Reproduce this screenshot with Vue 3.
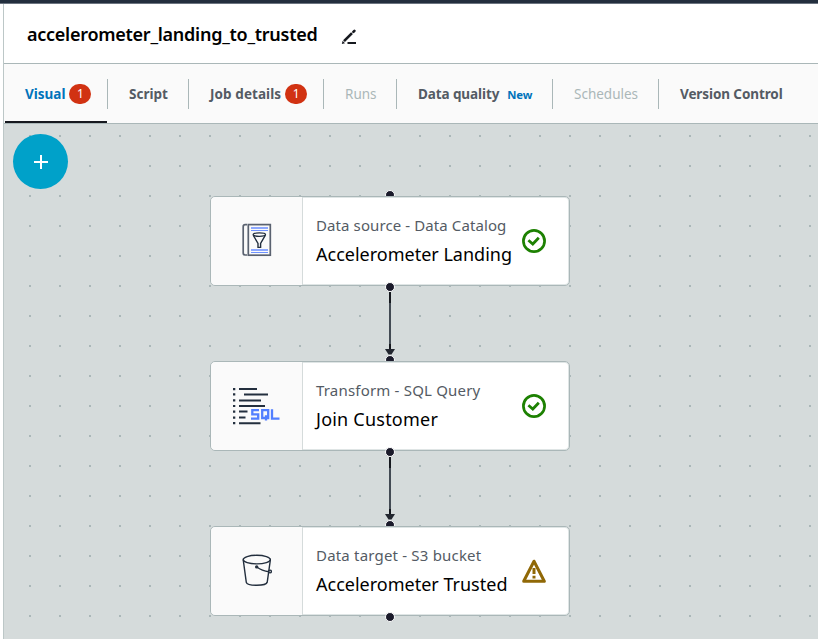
<script setup>
const tabs = [
  { label: 'Visual', state: 'active', badge: 1 },
  { label: 'Script' },
  { label: 'Job details', badge: 1, state: 'details' },
  { label: 'Runs', state: 'disabled' },
  { label: 'Data quality', tag: 'New', state: 'quality' },
  { label: 'Schedules', state: 'disabled' },
  { label: 'Version Control', state: 'version' },
]
const nodes = [
  { id: 'source', kind: 'Data source - Data Catalog', name: 'Accelerometer Landing', status: 'ok' },
  { id: 'sql', kind: 'Transform - SQL Query', name: 'Join Customer', status: 'ok' },
  { id: 'target', kind: 'Data target - S3 bucket', name: 'Accelerometer Trusted', status: 'warn' },
]
</script>

<template>
  <div class="page">
    <div class="topbar"></div>
    <div class="panel">
      <header class="head">
        <h1>accelerometer_landing_to_trusted</h1>
        <svg class="pencil" width="16" height="16" viewBox="0 0 16 16">
          <path d="M3 12.2 11 4.2" stroke="#16191f" stroke-width="2.6" />
          <path d="M12.4 2.8 13.4 1.8" stroke="#16191f" stroke-width="2.6" stroke-linecap="round" />
          <path d="M.8 15 1.6 11.8 4 14.2Z" fill="#16191f" />
          <path d="M6.5 14H15" stroke="#16191f" stroke-width="2" />
        </svg>
      </header>
      <nav class="tabs">
        <div v-for="t in tabs" :key="t.label" class="tab" :class="t.state">
          <span class="label">{{ t.label }}</span>
          <span v-if="t.badge" class="badge">{{ t.badge }}</span>
          <span v-if="t.tag" class="tag">{{ t.tag }}</span>
        </div>
      </nav>
      <main class="canvas">
        <button class="add" aria-label="Add node">
          <svg width="14" height="14" viewBox="0 0 14 14"><path d="M7 0V14M0 7H14" stroke="#fff" stroke-width="2" /></svg>
        </button>
        <div class="flow">
          <section v-for="(n, i) in nodes" :key="n.id" class="step">
            <i class="port top"></i>
            <article class="node">
              <div class="icon">
                <svg v-if="n.id === 'source'" width="30" height="34" viewBox="0 0 30 34" fill="none">
                  <path d="M5 1.7H3.2Q1.2 1.7 1.2 3.7V30Q1.2 32 3.2 32H5" stroke="#5a6270" stroke-width="1.7" />
                  <rect x="6.3" y="1.6" width="22" height="30.6" stroke="#5a6270" stroke-width="1.7" />
                  <path d="M9 5H26M9 27H26" stroke="#8da8ff" stroke-width="2" />
                  <path d="M9 7.5H26M9 29.5H26" stroke="#6f92ff" stroke-width="1" />
                  <ellipse cx="17.3" cy="11.6" rx="6.2" ry="1.7" stroke="#232f3e" stroke-width="1.3" />
                  <path d="M11.2 12.2 16 20.4V24.4H18.6V20.4L23.4 12.2" stroke="#232f3e" stroke-width="1.4" />
                </svg>
                <svg v-else-if="n.id === 'sql'" class="sql" width="48" height="38" viewBox="0 0 48 38" fill="none">
                  <path d="M1 2.1H3.3M1 7.4H3.3M1 13.4H3.3M1 19H3.3M1 24.6H3.3M1 30.6H3.3M1 36.2H3.3" stroke="#232f3e" stroke-width="2.2" />
                  <path d="M7 2.1H25M12 7.4H36M7 13.4H29M7 19H33M7 24.6H15.5M7 30.6H13.5M7 36.2H28.5" stroke="#232f3e" stroke-width="2" />
                  <path d="M27 23.2H20.3V27.4H26.2V31.6H19M30.2 23.2H36.2V31H30.2ZM34 28.2V33.4M40 22.2V31.6H47.5" stroke="#527fff" stroke-width="2.3" />
                </svg>
                <svg v-else width="30" height="34" viewBox="0 0 30 34" fill="none" stroke="#232f3e" stroke-width="1.4">
                  <ellipse cx="14.8" cy="6.6" rx="13.6" ry="4.3" />
                  <path d="M1.2 6.7 4.3 29.3Q5 32.3 14.8 32.3Q24.4 32.3 25.2 29.3L28.4 6.7" />
                  <path d="M14.8 14Q20 18 27 18.8" />
                  <circle cx="14.7" cy="13.9" r="1" fill="#232f3e" />
                  <circle cx="28" cy="18.5" r="1.4" />
                </svg>
              </div>
              <div class="copy">
                <p class="kind" :class="n.id">{{ n.kind }}</p>
                <p class="name" :class="n.id">{{ n.name }}</p>
              </div>
              <svg v-if="n.status === 'ok'" class="status" width="24" height="24" viewBox="0 0 24 24" fill="none" stroke="#1d8102">
                <circle cx="12" cy="12" r="10.6" stroke-width="2.7" />
                <path d="M6.4 11.2 10.8 15 16.8 8.8" stroke-width="2.8" />
              </svg>
              <svg v-else class="status" width="24" height="24" viewBox="0 0 24 24" fill="none" stroke="#906806">
                <path d="M12 2.2 22.3 22.3H1.7Z" stroke-width="3" stroke-linejoin="round" />
                <path d="M12 9V15M12 16.8V19.4" stroke-width="3" />
              </svg>
            </article>
            <i class="port bottom"></i>
            <svg v-if="i < 2" class="edge" width="12" height="66" viewBox="0 0 12 66">
              <path d="M6 0V58" stroke="#434b54" stroke-width="2" />
              <path d="M6 0V11M6 52V58" stroke="#16191f" stroke-width="2" />
              <path d="M1 57H11L7.5 62.5H4.5Z" fill="#232730" />
            </svg>
          </section>
        </div>
      </main>
    </div>
  </div>
</template>

<style>
body { margin: 0; overflow: hidden; }
</style>

<style scoped>
* { box-sizing: border-box; }
.page { width: 818px; height: 639px; display: flex; flex-direction: column; overflow: hidden; background: #fff; font-family: "Noto Sans", "Open Sans", sans-serif; }
.topbar { height: 4px; flex: none; background: #232f3e; border-bottom: 1px solid #6b7480; }
.panel { flex: 1; min-height: 0; margin-left: 3px; border-left: 1px solid #bcc7c7; display: flex; flex-direction: column; }
.head { height: 60px; flex: none; display: flex; align-items: center; border-bottom: 1px solid #aab7b8; padding: 0 0 0 23px; }
h1 { margin: 0; width: 314px; font-size: 18px; line-height: 24px; font-weight: 600; letter-spacing: -0.26px; color: #000; white-space: nowrap; }
.pencil { position: relative; top: 3px; }
.tabs { height: 60px; flex: none; display: grid; grid-template-columns: 103px 81px 135px 73px 156px 106px 1fr; padding-left: 1px; background: #fafafa; border-bottom: 1px solid #aab7b8; }
.tab { position: relative; display: flex; align-items: center; padding-left: 21px; color: #545b64; font-size: 13.5px; font-weight: 700; white-space: nowrap; }
.tab:not(:last-child)::after { content: ""; position: absolute; right: 0; top: 15px; height: 30px; width: 1px; background: #aab7b8; }
.tab:first-child { padding-left: 20px; }
.label { padding-top: 1px; }
.details { letter-spacing: 0.08px; }
.quality, .version { letter-spacing: -0.1px; }
.active { color: #0073bb; }
.active::before { content: ""; position: absolute; left: 0; right: 1px; bottom: 0; height: 2px; background: #16191f; }
.disabled { color: #aab7b8; font-weight: 400; }
.badge { width: 22px; height: 20px; margin-left: 4px; border-radius: 10px; background: #d13212; color: #fff; font-size: 12px; line-height: 20px; font-weight: 400; text-align: center; }
.tag { margin-left: 8px; padding-top: 2px; color: #0073bb; font-size: 11.3px; }
.canvas { position: relative; flex: 1; min-height: 0; padding: 10px 0 0 9px; background: conic-gradient(from 90deg at 28px 28px, #aab7b8 90deg, transparent 0) -3px -17px / 30px 30px, #d5dbdb; }
.add { position: absolute; left: 9px; top: 10px; width: 55px; height: 55px; border: 0; padding: 0 0 0 1px; border-radius: 50%; background: #00a1c9; display: flex; align-items: center; justify-content: center; }
.flow { width: 360px; margin: 62px 0 0 197px; display: flex; flex-direction: column; gap: 75px; }
.step { position: relative; height: 90px; }
.node { position: relative; height: 90px; display: flex; align-items: center; border: 1px solid #aab7b8; border-radius: 5px; background: #fff; overflow: hidden; box-shadow: inset 0 0 0 1px #dfe5e5; }
.icon { width: 92px; height: 88px; flex: none; display: flex; align-items: center; justify-content: center; padding-bottom: 2px; background: #fafafa; border-right: 1px solid #d5dbdb; border-radius: 4px 0 0 4px; }
.sql { margin: 2px 1px 0 0; }
.copy { width: 219px; padding: 0 0 2px 13px; white-space: nowrap; }
.copy p { margin: 0; }
.kind { font-size: 15px; line-height: 28px; letter-spacing: 0.19px; color: #545b64; }
.kind.source { letter-spacing: 0.1px; }
.name { font-size: 18px; line-height: 30px; color: #000; }
.name.sql { margin: 0; letter-spacing: 0.22px; }
.status { flex: none; }
.port { position: absolute; left: 175px; width: 10px; height: 10px; border: 1px solid #fff; border-radius: 50%; background: #1b1b2b; }
.top { top: -6px; }
.bottom { top: 86px; }
.edge { position: absolute; left: 174px; top: 96px; }
</style>
